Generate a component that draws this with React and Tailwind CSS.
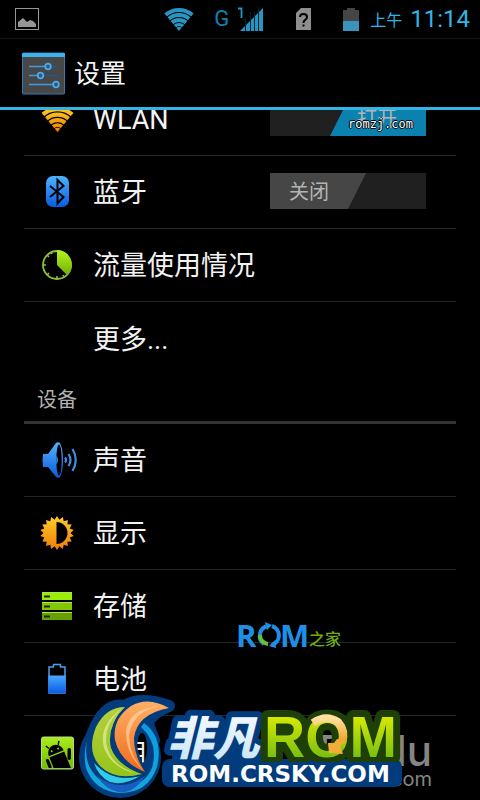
import { useId, useState } from "react";

const SUN_POINTS = Array.from({ length: 36 }, (_, i) => {
  const r = i % 2 === 0 ? 17 : 13.5;
  const a = (i * Math.PI) / 18 - Math.PI / 2;
  return `${(20 + r * Math.cos(a)).toFixed(2)},${(20 + r * Math.sin(a)).toFixed(2)}`;
}).join(" ");

function Gradient({ id, from, to }) {
  return (
    <linearGradient id={id} x1="0" y1="0" x2="0" y2="1">
      <stop offset="0" stopColor={from} />
      <stop offset="1" stopColor={to} />
    </linearGradient>
  );
}

function WifiFan({ className, from, to }) {
  const id = useId();
  return (
    <svg className={className} viewBox="0 0 30 23" aria-hidden="true">
      <defs>
        <linearGradient id={`${id}g`} gradientUnits="userSpaceOnUse" x1="0" y1="0" x2="0" y2="23">
          <stop offset="0" stopColor={from} />
          <stop offset="1" stopColor={to} />
        </linearGradient>
        <clipPath id={`${id}c`}>
          <polygon points="15,23 0,5 0,0 30,0 30,5" />
        </clipPath>
      </defs>
      <g clipPath={`url(#${id}c)`} fill="none" stroke={`url(#${id}g)`} strokeWidth="3.8">
        <circle cx="15" cy="23" r="21" />
        <circle cx="15" cy="23" r="16" />
        <circle cx="15" cy="23" r="11" />
        <circle cx="15" cy="23" r="6.4" strokeWidth="3.4" />
        <circle cx="15" cy="23" r="2" strokeWidth="4" />
      </g>
    </svg>
  );
}

function WifiIcon() {
  return (
    <span className="flex size-10 items-center justify-center">
      <WifiFan className="h-[25px] w-[33px]" from="#ffd21f" to="#f07a00" />
    </span>
  );
}

function BluetoothIcon() {
  return (
    <svg className="size-10" viewBox="0 0 40 40" aria-hidden="true">
      <defs>
        <Gradient id="bt" from="#4db2ff" to="#0a5be0" />
      </defs>
      <rect x="9" y="4" width="23" height="31" rx="7" fill="url(#bt)" />
      <path d="M13 14 L26.5 25 L20.5 31.5 V8 L26.5 14 L13 25" fill="none" stroke="#000" strokeWidth="2" />
    </svg>
  );
}

function DataIcon() {
  return (
    <svg className="size-10" viewBox="0 0 40 40" aria-hidden="true">
      <defs>
        <Gradient id="du" from="#b4f51a" to="#6fae06" />
      </defs>
      <circle cx="20" cy="20" r="14" fill="#000" stroke="#8cbf3a" strokeWidth="1.8" />
      <path d="M20 20 V5 A15 15 0 0 1 30.5 30.6 Z" fill="url(#du)" />
      <path d="M6 20h3M20 34v-3M10 10l2 2M10 30l2-2M14 7l1 2M27 32l-1-2" stroke="#8cbf3a" strokeWidth="1.6" />
    </svg>
  );
}

function SoundIcon() {
  return (
    <svg className="size-10" viewBox="0 0 40 40" aria-hidden="true">
      <defs>
        <Gradient id="snd" from="#55b4ff" to="#0a5ad8" />
      </defs>
      <path
        d="M6 14 H11 L19 3 Q21 1.5 23 3 Q26 9 26 20 Q26 31 23 37 Q21 38.5 19 37 L11 27 H6 Q5 20 6 14 Z"
        fill="url(#snd)"
      />
      <ellipse cx="22" cy="20" rx="2.7" ry="15.5" fill="#000" />
      <path d="M19.3 15.5 Q23 20 19.3 24.5 Z" fill="#2a86ec" />
      <path
        d="M28 17.5 Q30 20 28 22.5M31.5 14 Q35.5 20 31.5 26M35.5 9 Q42 20 35.5 31"
        fill="none"
        stroke="#3e8fe0"
        strokeWidth="2.2"
      />
    </svg>
  );
}

function DisplayIcon() {
  return (
    <svg className="size-10" viewBox="0 0 40 40" aria-hidden="true">
      <defs>
        <Gradient id="sun" from="#ffcf2a" to="#f07c08" />
      </defs>
      <polygon points={SUN_POINTS} fill="url(#sun)" />
      <path d="M19.5 9 A11 11 0 0 1 19.5 31 Z" fill="#000" />
    </svg>
  );
}

function StorageIcon() {
  return (
    <svg className="size-10" viewBox="0 0 40 40" aria-hidden="true">
      <rect x="5" y="6" width="30" height="8" fill="#98ee00" />
      <rect x="5" y="16" width="30" height="8" fill="#82c800" />
      <rect x="5" y="26" width="30" height="8" fill="#679f00" />
      <path d="M5 6.5h30M5 16.5h30M5 26.5h30" stroke="#b4dc6a" />
      <path d="M7 10.5h6M7 20.5h6M7 30.5h6" stroke="#1a2600" strokeWidth="2" />
    </svg>
  );
}

function BatteryIcon() {
  return (
    <svg className="size-10" viewBox="0 0 40 40" aria-hidden="true">
      <defs>
        <Gradient id="bat" from="#4aa8ff" to="#0a5ce6" />
      </defs>
      <path d="M12 34 V8 H16.5 V5.5 H23.5 V8 H28 V34 Z" fill="#000" stroke="#4a9de8" strokeWidth="1.5" />
      <rect x="11.3" y="16.5" width="17.5" height="17.5" fill="url(#bat)" />
    </svg>
  );
}

function AppsIcon() {
  return (
    <svg className="size-10" viewBox="0 0 40 40" aria-hidden="true">
      <defs>
        <Gradient id="app" from="#a8ee1c" to="#72b80a" />
        <clipPath id="appClip">
          <rect x="4.5" y="4" width="32" height="31" />
        </clipPath>
      </defs>
      <rect x="4.5" y="4" width="32" height="32" rx="2" fill="url(#app)" stroke="#b7d98a" />
      <g clipPath="url(#appClip)">
        <g transform="rotate(-22 20 22)">
          <path d="M12 20 A8 8.5 0 0 1 28 20 Z" />
          <rect x="12" y="21.5" width="16" height="18" />
          <rect x="7.5" y="22" width="3.2" height="10" rx="1.6" />
          <path d="M15 13 L13 9.5M25 13 L27 9.5" stroke="#000" strokeWidth="1.4" />
          <circle cx="16.5" cy="16.5" r="1" fill="#94da14" />
          <circle cx="23.5" cy="16.5" r="1" fill="#94da14" />
        </g>
        <rect x="30.5" y="15" width="3.4" height="12" rx="1.7" />
      </g>
    </svg>
  );
}

function StatusBar() {
  return (
    <div className="flex h-[39px] shrink-0 items-center border-b border-[#141414] pr-[10px] pl-[15px] text-[#33b5e5]">
      <svg className="h-[22px] w-6" viewBox="0 0 24 22" aria-hidden="true">
        <rect x="0.5" y="0.5" width="23" height="21" fill="none" stroke="#969696" />
        <path d="M3 19 V14 L8 10 L12 14 L15 12 L18 13 L21 16 V19 Z" fill="#969696" />
      </svg>
      <WifiFan className="ml-auto h-[23px] w-[30px]" from="#2795c2" to="#2795c2" />
      <span className="ml-5 text-[22px] leading-6 text-[#0e83b0]">G</span>
      <svg className="ml-[9px] h-6 w-[26px]" viewBox="0 0 26 24" aria-hidden="true">
        <path d="M0 1.5 H3.5 V11" fill="none" stroke="#2795c2" strokeWidth="1.8" />
        <path d="M2 24 L25 1 V24 Z" fill="#2795c2" />
        <path d="M7.5 10V24M12.5 5V24M16.5 5V24M20.5 0V24" stroke="#04202c" strokeWidth="1" />
      </svg>
      <svg className="ml-8 h-[22px] w-[15px]" viewBox="0 0 15 22" aria-hidden="true">
        <path d="M5 0 H15 V22 H0 V5 Z" fill="#8e8e8e" />
        <path d="M4 9 Q4 6 7.5 6 Q11 6 11 9 Q11 11 9 12 Q7.5 13 7.5 15" fill="none" stroke="#000" strokeWidth="2" />
        <rect x="6.5" y="16.5" width="2" height="2" fill="#000" />
      </svg>
      <svg className="ml-8 h-6 w-4" viewBox="0 0 16 24" aria-hidden="true">
        <path d="M0 3 H4 V1 H12 V3 H16 V14 H0 Z" fill="#454545" />
        <rect y="14" width="16" height="10" fill="#3894bd" />
      </svg>
      <span className="ml-[11px] pt-1 text-[16px] leading-6">上午</span>
      <span className="ml-2 text-[24px] leading-6">11:14</span>
    </div>
  );
}

function Header() {
  return (
    <header className="flex h-[71px] shrink-0 items-center border-b-3 border-[#33b5e5] pl-[22px]">
      <svg className="size-[43px]" viewBox="0 0 43 43" aria-hidden="true">
        <rect x="0.5" y="1" width="42" height="41" rx="1" fill="#474747" stroke="#2d7cb8" />
        <rect x="0" y="1" width="43" height="4" rx="1" fill="#3fb2ea" />
        <path d="M7 14.5h18M7 23.5h10M7 32.5h26" stroke="#3c9be0" strokeWidth="1.6" />
        <path d="M29 14.5h7M22 23.5h14" stroke="#27577c" strokeWidth="1.4" />
        <g fill="#2f5a7a" stroke="#4aa9ea" strokeWidth="1.8">
          <circle cx="26" cy="14.5" r="2.8" />
          <circle cx="18.5" cy="23.5" r="2.8" />
          <circle cx="34" cy="32.5" r="2.8" />
        </g>
      </svg>
      <h1 className="ml-[9px] pt-0.5 text-[26px] leading-8">设置</h1>
    </header>
  );
}

function Switch({ label, defaultOn }) {
  const [on, setOn] = useState(defaultOn);
  return (
    <button
      type="button"
      role="switch"
      aria-checked={on}
      aria-label={label}
      onClick={() => setOn(!on)}
      className={`mr-[30px] mb-0.5 ml-auto flex h-9 w-[156px] bg-[#202020] text-[20px] leading-[38px] text-[#b4b4b4] ${on ? "justify-end" : ""}`}
    >
      {on ? (
        <span className="h-9 w-24 bg-[#0a81ae] pr-0.5 [clip-path:polygon(18px_0,100%_0,100%_100%,0_100%)]">打开</span>
      ) : (
        <span className="h-9 w-24 bg-[#464646] pr-[18px] [clip-path:polygon(0_0,100%_0,78px_100%,0_100%)]">关闭</span>
      )}
    </button>
  );
}

function Row({ icon, label, last, children }) {
  return (
    <li className={`flex h-[73px] items-center pl-[13px] ${last ? "" : "border-b border-[#262626]"}`}>
      <span className="mr-4 size-10 shrink-0">{icon}</span>
      {children ? (
        <>
          <span className="pt-0.5 text-[27px] leading-8">{label}</span>
          {children}
        </>
      ) : (
        <a href="#" className="grow pt-0.5 text-[27px] leading-8">
          {label}
        </a>
      )}
    </li>
  );
}

function RomHomeMark() {
  return (
    <svg className="absolute top-[610px] left-[230px] h-[50px] w-[120px]" viewBox="230 610 120 50">
      <g fontFamily="'Open Sans'" fontWeight="700" fontSize="31" fill="#1e8fe6">
        <text x="236" y="647">R</text>
        <text x="280" y="647">M</text>
      </g>
      <path d="M268 626 A10 10 0 0 0 264 644" fill="none" stroke="#1e8fe6" strokeWidth="4" />
      <path d="M260 635 A9 9 0 0 0 268 644" fill="none" stroke="#6cc02c" strokeWidth="4" />
      <path d="M272 626 A10 10 0 0 1 272 645" fill="none" stroke="#1e8fe6" strokeWidth="4" />
      <path d="M265 622 L272 625 L267 630 ZM275 640 L276 648 L269 646 Z" fill="#1e8fe6" />
      <text x="309" y="645" fontFamily="'Noto Sans CJK SC'" fontSize="16" fontWeight="500" fill="#6fae0c">
        之家
      </text>
    </svg>
  );
}

function CrskyLogo() {
  return (
    <svg className="absolute top-[692px] left-[76px] h-[108px] w-[336px]" viewBox="76 692 336 108">
      <defs>
        <Gradient id="ring" from="#0a9be0" to="#12a8dc" />
        <Gradient id="leaf" from="#b4d040" to="#94c41a" />
        <Gradient id="flame" from="#ffb066" to="#ee6a1c" />
        <Gradient id="ice" from="#ffffff" to="#c4e2fa" />
        <Gradient id="lime" from="#f0f400" to="#5fb414" />
        <Gradient id="gold" from="#ffe0a0" to="#f0a020" />
        <mask id="gap">
          <rect x="76" y="692" width="336" height="108" fill="#fff" />
          <ellipse cx="142" cy="748" rx="5" ry="15" fill="#000" />
        </mask>
      </defs>
      <g fill="#023c7c" stroke="#023c7c" strokeLinejoin="round" mask="url(#gap)">
        <circle cx="120" cy="757" r="41" stroke="none" />
        <path d="M92 735 Q104 702 125 706 Q140 696 169 706 Q150 714 148 724 L154 740 L120 760 Z" strokeWidth="12" />
        <rect x="162" y="759" width="240" height="28" rx="8" stroke="none" />
        <rect x="172" y="722" width="84" height="44" stroke="none" />
      </g>
      <path
        d="M87 741 Q84 760 92 771 Q103 787 120 787 Q144 787 152 768 Q159 743 141 727 L144 723 Q164 738 157 767 Q148 793 120 793 Q94 791 86 768 Q83 753 87 741 Z"
        fill="url(#ring)"
      />
      <path d="M97 776 Q120 794 145 776 Q134 794 118 792 Q105 789 97 776 Z" fill="#1a5cc0" />
      <path d="M94 763 Q113 783 140 776 Q124 786 110 782 Q98 776 94 763 Z" fill="#31cce4" />
      <path
        d="M125 707 Q106 707 96 727 Q86 752 101 767 Q116 781 142 774 Q118 766 111 748 Q106 727 125 707 Z"
        fill="url(#leaf)"
        stroke="#023c7c"
        strokeWidth="3"
        paintOrder="stroke"
      />
      <path d="M121 709 Q98 726 104 748 Q113 770 139 774 Q113 768 107 747 Q102 727 121 709 Z" fill="#eef4b4" opacity="0.6" />
      <path
        d="M169 708 Q148 696 131 706 Q112 719 115 740 Q120 762 145 772 Q134 756 134 738 Q137 714 169 708 Z"
        fill="url(#flame)"
        stroke="#023c7c"
        strokeWidth="5"
        strokeLinejoin="round"
        paintOrder="stroke"
      />
      <path d="M162 706 Q128 708 126 732 Q126 755 143 770 Q129 754 129 735 Q133 710 162 706 Z" fill="#ffe0b0" opacity="0.6" />
      <text
        x="167"
        y="755"
        fontFamily="'Noto Sans CJK SC'"
        fontWeight="900"
        fontStyle="italic"
        fontSize="46"
        fill="url(#ice)"
        stroke="#023c7c"
        strokeWidth="12"
        strokeLinejoin="round"
        paintOrder="stroke"
      >
        非凡
      </text>
      <text
        x="264"
        y="757"
        fontFamily="'Liberation Sans'"
        fontWeight="700"
        fontSize="57"
        fill="url(#lime)"
        stroke="#1f3f08"
        strokeWidth="14"
        strokeLinejoin="round"
        paintOrder="stroke"
      >
        ROM
      </text>
      <path d="M313 723 Q326 714 338 722 Q346 731 342 742" fill="none" stroke="url(#gold)" strokeWidth="8" />
      <path d="M328 743 L334 743 L337 739 L347 741 L340 746 L343 754 L329 753 Z" fill="#f2ad38" />
      <rect x="162" y="762" width="240" height="25" rx="8" fill="#023c7c" />
      <text x="171" y="782" fontFamily="'DejaVu Sans'" fontWeight="700" fontSize="23" fill="#fff">
        ROM.CRSKY.COM
      </text>
    </svg>
  );
}

export default function App() {
  return (
    <div
      lang="zh-CN"
      className="relative flex h-screen flex-col overflow-hidden bg-black font-[Roboto,'Noto_Sans_CJK_SC',sans-serif] text-[#f3f3f3]"
    >
      <StatusBar />
      <Header />

      <main className="min-h-0 grow overflow-hidden px-6">
        {/* list is scrolled, so the first row is partly under the header */}
        <ul className="-mt-[27px]">
          <Row icon={<WifiIcon />} label="WLAN">
            <Switch label="WLAN" defaultOn={true} />
          </Row>
          <Row icon={<BluetoothIcon />} label="蓝牙">
            <Switch label="蓝牙" defaultOn={false} />
          </Row>
          <Row icon={<DataIcon />} label="流量使用情况" />
          <Row label="更多..." last />
        </ul>
        <h2 className="flex h-[49px] items-center border-b-3 border-[#333] pt-1 pl-[13px] text-[20px] leading-6 text-[#b0b0b0]">
          设备
        </h2>
        <ul>
          <Row icon={<SoundIcon />} label="声音" />
          <Row icon={<DisplayIcon />} label="显示" />
          <Row icon={<StorageIcon />} label="存储" />
          <Row icon={<BatteryIcon />} label="电池" />
          <Row icon={<AppsIcon />} label="应用" last />
        </ul>
      </main>

      <span className="absolute top-[116px] left-[348px] font-['DejaVu_Sans_Mono',monospace] text-[12px] leading-4 text-white [text-shadow:1px_0_#000,-1px_0_#000,0_1px_#000,0_-1px_#000]">
        romzj.com
      </span>
      <RomHomeMark />
      <div className="absolute top-[729px] right-12 text-right font-[Inter,sans-serif] text-[#858585]">
        <p className="text-[42px] leading-[44px] font-medium">Baidu</p>
        <p className="text-[20px] leading-3">.com</p>
      </div>
      <CrskyLogo />
    </div>
  );
}
